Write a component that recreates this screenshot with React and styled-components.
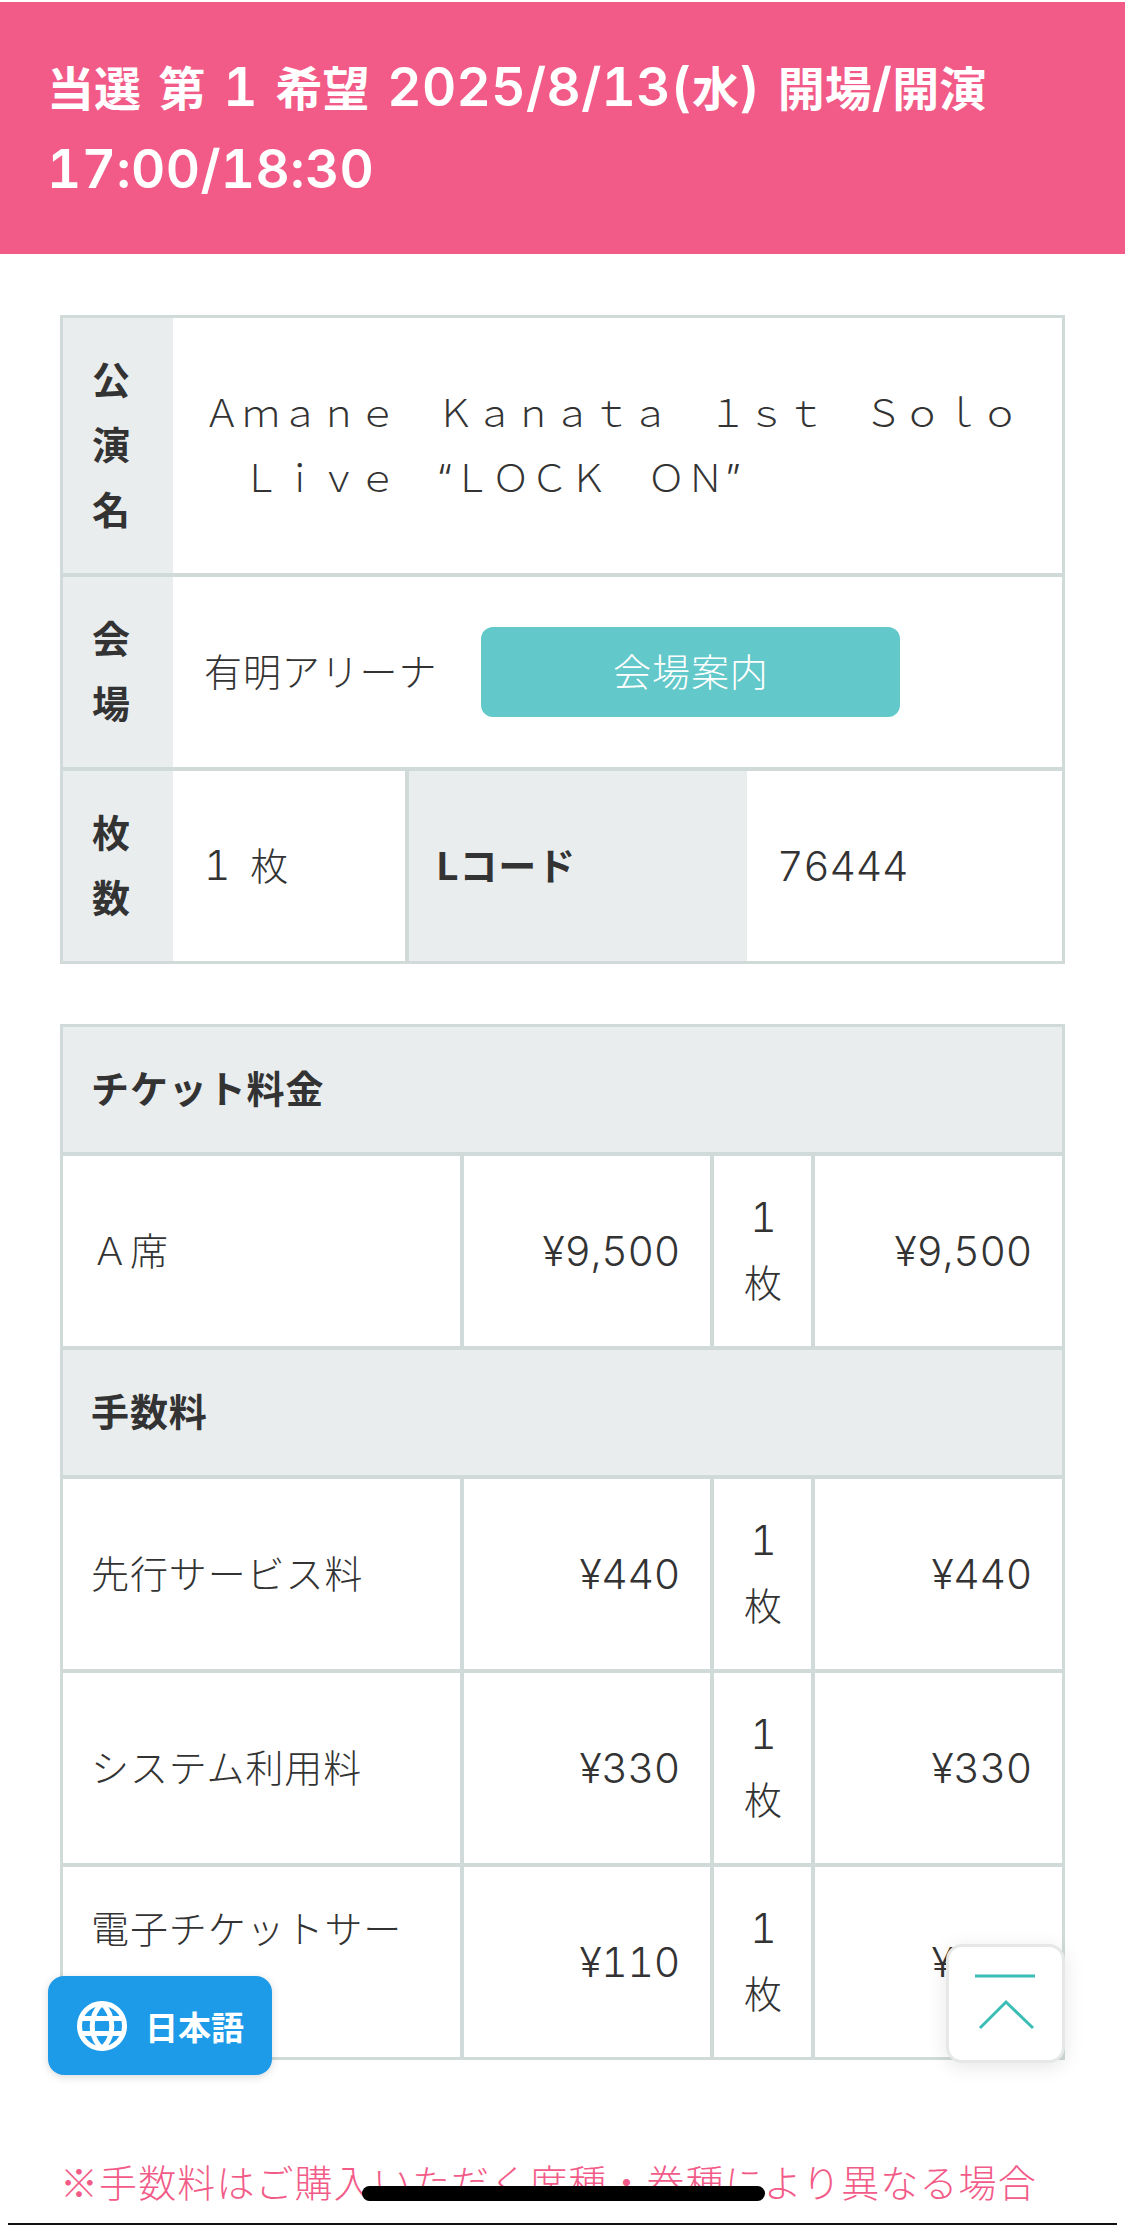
import styled, { createGlobalStyle } from 'styled-components';

const colors = {
  pink: '#f25b88',
  line: '#cfdad9',
  gray: '#e9edee',
  text: '#333',
  teal: '#62c8c9',
  mint: '#3cbdb5',
  blue: '#1e9be8',
};

const GlobalStyle = createGlobalStyle`
  html, body {
    margin: 0;
    padding: 0;
    background: #fff;
  }
  body {
    font-family: Inter, "Noto Sans CJK JP", sans-serif;
    font-weight: 300;
    font-size: 38px;
    line-height: 65px;
    letter-spacing: 0.9px;
    font-variant-numeric: tabular-nums;
    color: ${colors.text};
  }
`;

const Screen = styled.div`
  position: relative;
  width: 1125px;
  height: 2225px;
  padding-top: 2px;
  box-sizing: border-box;
  overflow: hidden;
`;

const Title = styled.h1`
  margin: 0;
  padding: 46px 47px 42px;
  background: ${colors.pink};
  color: #fff;
  font-size: 47px;
  font-weight: 600;
  line-height: 82px;
  letter-spacing: 0;
  word-spacing: 5px;
`;

const Num = styled.span`
  font-size: 41px;
  letter-spacing: -0.3px;
  line-height: 0;
`;

const TitleNum = styled(Num)`
  font-size: 53px;
  letter-spacing: 0.4px;
`;

const Content = styled.main`
  padding: 61px 60px 0;
`;

const Panel = styled.section`
  border: 3px solid ${colors.line};
  margin-bottom: 60px;
`;

const Row = styled.div`
  display: grid;
  grid-template-columns: ${({ $cols }) => $cols};
  &:not(:first-child) {
    border-top: 4px solid ${colors.line};
  }
`;

const Cell = styled.div`
  display: grid;
  align-content: center;
  padding: 30px 30px 30px ${({ $left }) => $left || 28}px;
  min-width: 0;
  text-align: ${({ $align }) => $align || 'left'};
  ${({ $num }) => $num && 'font-size: 41px; letter-spacing: -0.3px;'}
  ${({ $line }) => $line && `border-left: 4px solid ${colors.line};`}
`;

const Head = styled(Cell)`
  background: ${colors.gray};
  font-weight: 700;
`;

const Label = styled(Head)`
  padding: 30px 42px 30px 29px;
`;

const Venue = styled.div`
  display: flex;
  align-items: center;
  gap: 44px;
  padding: 30px 30px 30px 31px;
`;

const GuideButton = styled.a`
  width: 419px;
  height: 90px;
  display: flex;
  align-items: center;
  justify-content: center;
  border-radius: 12px;
  background: ${colors.teal};
  color: #fff;
`;

const Note = styled.p`
  margin: 88px 0 0;
  font-family: "Noto Sans CJK JP", sans-serif;
  letter-spacing: 1.1px;
  color: ${colors.pink};
`;

const LangButton = styled.button`
  position: absolute;
  left: 48px;
  top: 1976px;
  width: 224px;
  height: 99px;
  padding: 0 0 0 29px;
  border: 0;
  border-radius: 16px;
  display: flex;
  align-items: center;
  gap: 18px;
  background: ${colors.blue};
  box-shadow: 0 2px 8px rgba(0, 0, 0, 0.15);
  color: #fff;
  font-family: inherit;
  font-size: 33px;
  font-weight: 600;
  letter-spacing: 0;
`;

const TopButton = styled.button`
  position: absolute;
  left: 946px;
  top: 1944px;
  width: 119px;
  height: 119px;
  padding: 0;
  box-sizing: border-box;
  border: 3px solid #e6e8e8;
  border-radius: 16px;
  background: #fff;
  box-shadow: 0 4px 20px rgba(0, 0, 0, 0.1);
`;

const HomeBar = styled.div`
  position: absolute;
  left: 362px;
  top: 2186px;
  width: 403px;
  height: 15px;
  border-radius: 8px;
  background: #000;
`;

const EdgeLine = styled.div`
  position: absolute;
  left: 8px;
  right: 8px;
  bottom: 0;
  height: 2px;
  background: #111;
`;

const Globe = () => (
  <svg width="50" height="50" viewBox="0 0 50 50" fill="none" stroke="#fff" strokeWidth="5">
    <circle cx="25" cy="25" r="22.5" />
    <path d="M25 2.5C12 14 12 36 25 47.5C38 36 38 14 25 2.5Z" />
    <path d="M4 17.5H46M4 32.5H46" />
  </svg>
);

const TopIcon = () => (
  <svg width="113" height="113" viewBox="0 0 113 113" fill="none" stroke={colors.mint}>
    <path d="M26 29H86" strokeWidth="3" />
    <path d="M31 81L57 55L84 81" strokeWidth="3" />
  </svg>
);

const priceCols = '397px 250px 101px 251px';

const PriceRow = ({ name, price }) => (
  <Row $cols={priceCols}>
    <Cell>{name}</Cell>
    <Cell $line $num $align="right">{price}</Cell>
    <Cell $line $left={30} $align="center">
      <span><Num>1</Num> 枚</span>
    </Cell>
    <Cell $line $num $align="right">{price}</Cell>
  </Row>
);

export default function App() {
  return (
    <Screen>
      <GlobalStyle />
      <Title>
        当選 第 <TitleNum>1</TitleNum> 希望 <TitleNum>2025/8/13(</TitleNum>水<TitleNum>)</TitleNum> 開場<TitleNum>/</TitleNum>開演 <TitleNum>17:00/18:30</TitleNum>
      </Title>
      <Content>
        <Panel>
          <Row $cols="110px 1fr">
            <Label>公演名</Label>
            <Cell $left={30}>
              <span>
                Ａｍａｎｅ　Ｋａｎａｔａ　１ｓｔ　Ｓｏｌｏ<br />
                {'\u3000'}Ｌｉｖｅ{'\u3000'}“ＬＯＣＫ　ＯＮ”
              </span>
            </Cell>
          </Row>
          <Row $cols="110px 1fr">
            <Label>会場</Label>
            <Venue>
              有明アリーナ
              <GuideButton>会場案内</GuideButton>
            </Venue>
          </Row>
          <Row $cols="110px 232px 342px 1fr">
            <Label>枚数</Label>
            <Cell $left={31}>
              <span><Num>1</Num>{'\u2002'}枚</span>
            </Cell>
            <Head $line>Lコード</Head>
            <Cell $left={30} $num>76444</Cell>
          </Row>
        </Panel>
        <Panel>
          <Row $cols="1fr"><Head>チケット料金</Head></Row>
          <PriceRow name="Ａ席" price="¥9,500" />
          <Row $cols="1fr"><Head>手数料</Head></Row>
          <PriceRow name="先行サービス料" price="¥440" />
          <PriceRow name="システム利用料" price="¥330" />
          <PriceRow name="電子チケットサービス料" price="¥110" />
        </Panel>
        <Note>※手数料はご購入いただく席種・券種により異なる場合がございます。</Note>
      </Content>
      <LangButton><Globe />日本語</LangButton>
      <TopButton><TopIcon /></TopButton>
      <HomeBar />
      <EdgeLine />
    </Screen>
  );
}
